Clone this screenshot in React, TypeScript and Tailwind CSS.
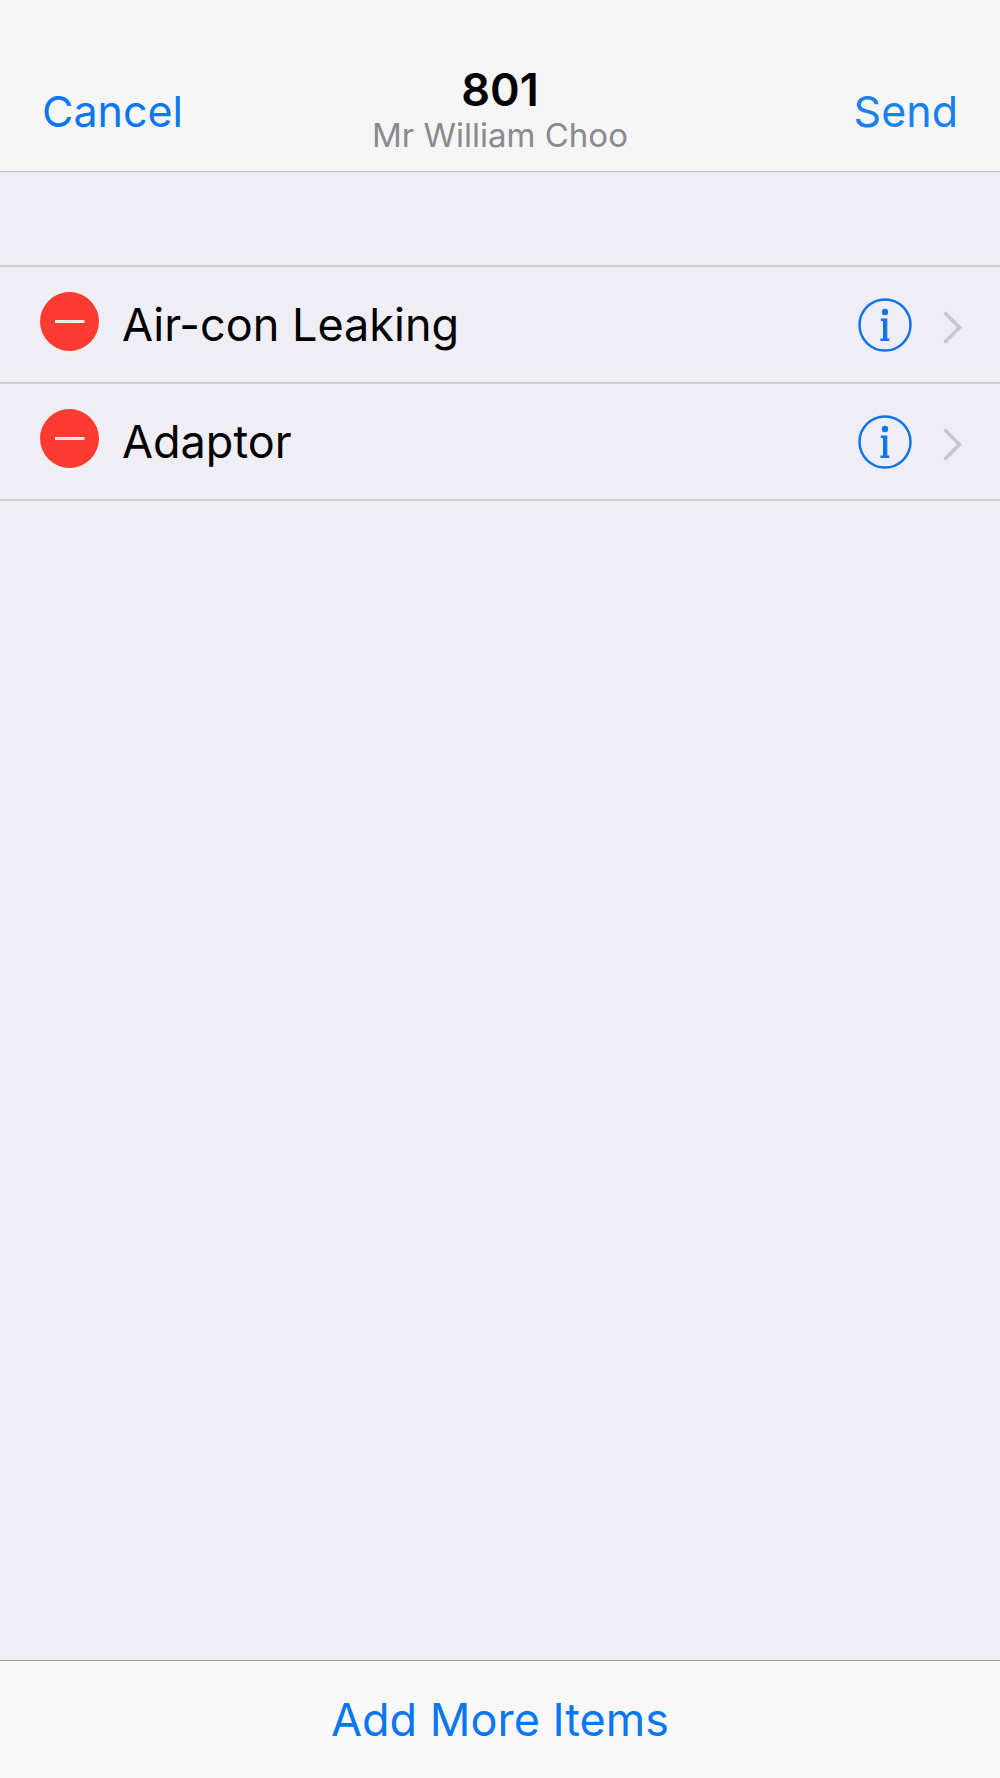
import { useState } from "react";

const roomNumber = "801";
const guestName = "Mr William Choo";
const initialItems = ["Air-con Leaking", "Adaptor"];

export default function App() {
  const [items, setItems] = useState(initialItems);

  const removeItem = (name: string) =>
    setItems((current) => current.filter((item) => item !== name));

  return (
    <div className="flex min-h-screen flex-col bg-[#efeef4] font-['Inter','Liberation_Sans',sans-serif] text-black">
      <header className="border-b border-[#bcbbc0] bg-[#f6f6f6] pt-[52px] pb-0.5">
        <div className="grid min-h-[117px] grid-cols-[1fr_auto_1fr] items-center px-[42px]">
          <button
            type="button"
            className="justify-self-start text-[43px] leading-[52px] text-[#0b76f1]"
          >
            Cancel
          </button>
          <div className="pb-1 text-center">
            <h1 className="text-[45px] font-semibold leading-[52px]">
              {roomNumber}
            </h1>
            <p className="text-[33px] leading-[38px] text-[#8a8a8f]">
              {guestName}
            </p>
          </div>
          <button
            type="button"
            className="justify-self-end text-[43px] leading-[52px] text-[#1a80ee]"
          >
            Send
          </button>
        </div>
      </header>

      <main className="flex-1 pt-[93px]">
        <ul className="border-t-2 border-[#cecdd2]">
          {items.map((item) => (
            <ItemRow key={item} name={item} onRemove={() => removeItem(item)} />
          ))}
        </ul>
      </main>

      <footer className="flex min-h-[118px] items-center justify-center border-t border-[#9a9a9f] bg-[#f9f9f9]">
        <button
          type="button"
          className="text-[45px] leading-[52px] text-[#0b76f1]"
        >
          Add More Items
        </button>
      </footer>
    </div>
  );
}

function ItemRow({ name, onRemove }: { name: string; onRemove: () => void }) {
  return (
    <li className="flex min-h-[117px] items-center border-b-2 border-[#cecdd2] pl-10 pr-9">
      <button type="button" aria-label={`Remove ${name}`} onClick={onRemove}>
        <RemoveIcon />
      </button>
      <span className="flex-1 pl-[22px] text-[45px] leading-[52px]">
        {name}
      </span>
      <button type="button" aria-label={`Details for ${name}`}>
        <InfoIcon />
      </button>
      <button type="button" aria-label={`Open ${name}`} className="ml-[30px]">
        <ChevronIcon />
      </button>
    </li>
  );
}

function RemoveIcon() {
  return (
    <svg className="block" width="60" height="65" viewBox="0 0 60 65">
      <ellipse cx="29.5" cy="34" rx="26" ry="29" fill="#f3f0f0" />
      <circle cx="29.5" cy="29.5" r="29.5" fill="#fe3b30" />
      <rect x="15" y="28" width="29.5" height="3" fill="#ffeae8" />
    </svg>
  );
}

function InfoIcon() {
  return (
    <svg className="block" width="54" height="54" viewBox="0 0 54 54">
      <circle
        cx="27"
        cy="27"
        r="25.5"
        fill="none"
        stroke="#1074ea"
        strokeWidth="2.5"
      />
      <circle cx="27" cy="14" r="3.2" fill="#1074ea" />
      <path
        d="M22.8 20.5H29.3V40.4H31.3V43H22.4V40.4H25V23.1H22.8Z"
        fill="#1074ea"
      />
    </svg>
  );
}

function ChevronIcon() {
  return (
    <svg className="block" width="22" height="40" viewBox="0 0 22 40">
      <path
        d="M2.5 7.5L17.5 22.5L2.5 37.5"
        fill="none"
        stroke="#c7c6cc"
        strokeWidth="3.5"
      />
    </svg>
  );
}
